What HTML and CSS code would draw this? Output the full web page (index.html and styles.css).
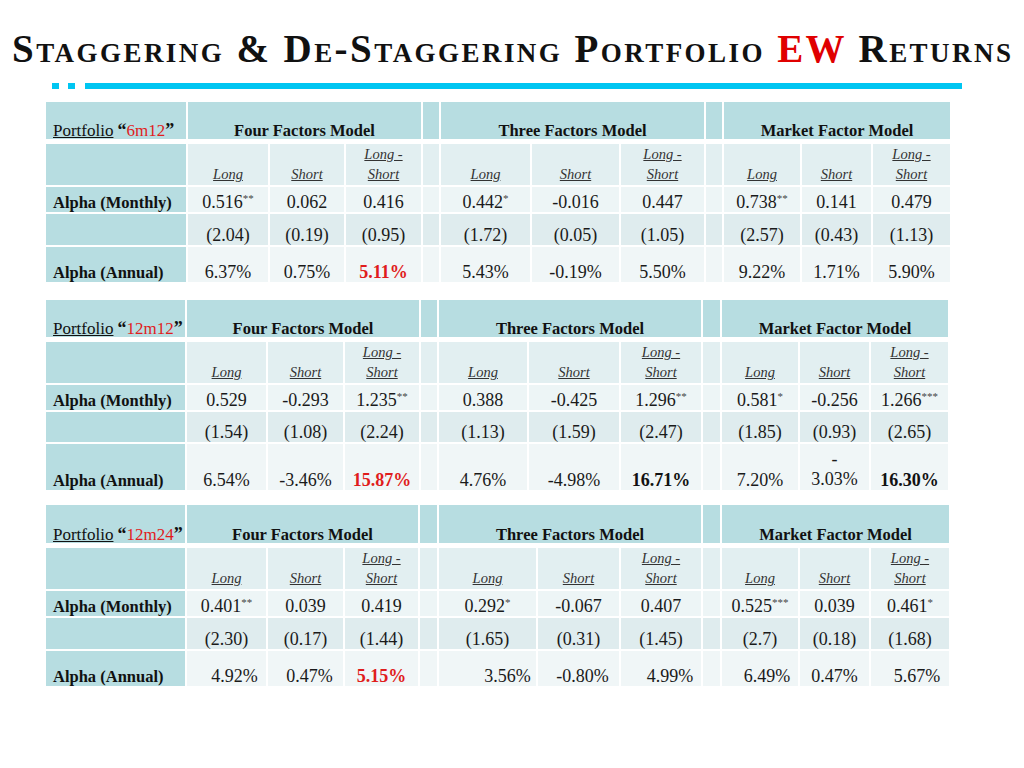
FILE: index.html
```html
<!DOCTYPE html>
<html>
<head>
<meta charset="utf-8">
<link rel="stylesheet" href="styles.css">
</head>
<body>
<h1 class="title">Staggering &amp; De-Staggering Portfolio <span class="ew">EW</span> Returns</h1>
<div class="rule"><span class="sq"></span><span class="sq"></span><span class="bar"></span></div>

<div class="tbl t1">
  <div class="c hd lab"><span><u class="pf">Portfolio</u> <b class="q">“</b><span class="red">6m12</span><b class="q">”</b></span></div>
  <div class="c hd span3">Four Factors Model</div>
  <div class="c hd"></div>
  <div class="c hd span3">Three Factors Model</div>
  <div class="c hd"></div>
  <div class="c hd span3">Market Factor Model</div>

  <div class="c lab"></div>
  <div class="c rs sh"><span>Long</span></div><div class="c rs sh"><span>Short</span></div><div class="c rs sh"><span>Long -<br>Short</span></div>
  <div class="c rs"></div>
  <div class="c rs sh"><span>Long</span></div><div class="c rs sh"><span>Short</span></div><div class="c rs sh"><span>Long -<br>Short</span></div>
  <div class="c rs"></div>
  <div class="c rs sh"><span>Long</span></div><div class="c rs sh"><span>Short</span></div><div class="c rs sh"><span>Long -<br>Short</span></div>

  <div class="c lab">Alpha (Monthly)</div>
  <div class="c rm"><span>0.516<sup>**</sup></span></div><div class="c rm">0.062</div><div class="c rm">0.416</div>
  <div class="c rm"></div>
  <div class="c rm"><span>0.442<sup>*</sup></span></div><div class="c rm">-0.016</div><div class="c rm">0.447</div>
  <div class="c rm"></div>
  <div class="c rm"><span>0.738<sup>**</sup></span></div><div class="c rm">0.141</div><div class="c rm">0.479</div>

  <div class="c lab"></div>
  <div class="c rt">(2.04)</div><div class="c rt">(0.19)</div><div class="c rt">(0.95)</div>
  <div class="c rt"></div>
  <div class="c rt">(1.72)</div><div class="c rt">(0.05)</div><div class="c rt">(1.05)</div>
  <div class="c rt"></div>
  <div class="c rt">(2.57)</div><div class="c rt">(0.43)</div><div class="c rt">(1.13)</div>

  <div class="c lab">Alpha (Annual)</div>
  <div class="c ra">6.37%</div><div class="c ra">0.75%</div><div class="c ra redb">5.11%</div>
  <div class="c ra"></div>
  <div class="c ra">5.43%</div><div class="c ra">-0.19%</div><div class="c ra">5.50%</div>
  <div class="c ra"></div>
  <div class="c ra">9.22%</div><div class="c ra">1.71%</div><div class="c ra">5.90%</div>
</div>

<div class="tbl t2">
  <div class="c hd lab"><span><u class="pf">Portfolio</u> <b class="q">“</b><span class="red">12m12</span><b class="q">”</b></span></div>
  <div class="c hd span3">Four Factors Model</div>
  <div class="c hd"></div>
  <div class="c hd span3">Three Factors Model</div>
  <div class="c hd"></div>
  <div class="c hd span3">Market Factor Model</div>

  <div class="c lab"></div>
  <div class="c rs sh"><span>Long</span></div><div class="c rs sh"><span>Short</span></div><div class="c rs sh"><span>Long -<br>Short</span></div>
  <div class="c rs"></div>
  <div class="c rs sh"><span>Long</span></div><div class="c rs sh"><span>Short</span></div><div class="c rs sh"><span>Long -<br>Short</span></div>
  <div class="c rs"></div>
  <div class="c rs sh"><span>Long</span></div><div class="c rs sh"><span>Short</span></div><div class="c rs sh"><span>Long -<br>Short</span></div>

  <div class="c lab">Alpha (Monthly)</div>
  <div class="c rm">0.529</div><div class="c rm">-0.293</div><div class="c rm"><span>1.235<sup>**</sup></span></div>
  <div class="c rm"></div>
  <div class="c rm">0.388</div><div class="c rm">-0.425</div><div class="c rm"><span>1.296<sup>**</sup></span></div>
  <div class="c rm"></div>
  <div class="c rm"><span>0.581<sup>*</sup></span></div><div class="c rm">-0.256</div><div class="c rm"><span>1.266<sup>***</sup></span></div>

  <div class="c lab"></div>
  <div class="c rt">(1.54)</div><div class="c rt">(1.08)</div><div class="c rt">(2.24)</div>
  <div class="c rt"></div>
  <div class="c rt">(1.13)</div><div class="c rt">(1.59)</div><div class="c rt">(2.47)</div>
  <div class="c rt"></div>
  <div class="c rt">(1.85)</div><div class="c rt">(0.93)</div><div class="c rt">(2.65)</div>

  <div class="c lab">Alpha (Annual)</div>
  <div class="c ra">6.54%</div><div class="c ra">-3.46%</div><div class="c ra redb">15.87%</div>
  <div class="c ra"></div>
  <div class="c ra">4.76%</div><div class="c ra">-4.98%</div><div class="c ra bold">16.71%</div>
  <div class="c ra"></div>
  <div class="c ra">7.20%</div><div class="c ra ctr"><span>-<br>3.03%</span></div><div class="c ra bold">16.30%</div>
</div>

<div class="tbl t3">
  <div class="c hd lab"><span><u class="pf">Portfolio</u> <b class="q">“</b><span class="red">12m24</span><b class="q">”</b></span></div>
  <div class="c hd span3">Four Factors Model</div>
  <div class="c hd"></div>
  <div class="c hd span3">Three Factors Model</div>
  <div class="c hd"></div>
  <div class="c hd span3">Market Factor Model</div>

  <div class="c lab"></div>
  <div class="c rs sh"><span>Long</span></div><div class="c rs sh"><span>Short</span></div><div class="c rs sh"><span>Long -<br>Short</span></div>
  <div class="c rs"></div>
  <div class="c rs sh"><span>Long</span></div><div class="c rs sh"><span>Short</span></div><div class="c rs sh"><span>Long -<br>Short</span></div>
  <div class="c rs"></div>
  <div class="c rs sh"><span>Long</span></div><div class="c rs sh"><span>Short</span></div><div class="c rs sh"><span>Long -<br>Short</span></div>

  <div class="c lab">Alpha (Monthly)</div>
  <div class="c rm"><span>0.401<sup>**</sup></span></div><div class="c rm">0.039</div><div class="c rm">0.419</div>
  <div class="c rm"></div>
  <div class="c rm"><span>0.292<sup>*</sup></span></div><div class="c rm">-0.067</div><div class="c rm">0.407</div>
  <div class="c rm"></div>
  <div class="c rm"><span>0.525<sup>***</sup></span></div><div class="c rm">0.039</div><div class="c rm"><span>0.461<sup>*</sup></span></div>

  <div class="c lab"></div>
  <div class="c rt">(2.30)</div><div class="c rt">(0.17)</div><div class="c rt">(1.44)</div>
  <div class="c rt"></div>
  <div class="c rt">(1.65)</div><div class="c rt">(0.31)</div><div class="c rt">(1.45)</div>
  <div class="c rt"></div>
  <div class="c rt">(2.7)</div><div class="c rt">(0.18)</div><div class="c rt">(1.68)</div>

  <div class="c lab">Alpha (Annual)</div>
  <div class="c ra pl16">4.92%</div><div class="c ra pl8">0.47%</div><div class="c ra redb">5.15%</div>
  <div class="c ra"></div>
  <div class="c ra pl40">3.56%</div><div class="c ra pl8">-0.80%</div><div class="c ra pl18">4.99%</div>
  <div class="c ra"></div>
  <div class="c ra pl14">6.49%</div><div class="c ra">0.47%</div><div class="c ra pl14">5.67%</div>
</div>
</body>
</html>
```

FILE: styles.css
```css
html, body {
  margin: 0;
  padding: 0;
  background: #fff;
}
body {
  width: 1024px;
  height: 768px;
  overflow: hidden;
  font-family: "Liberation Serif", "Times New Roman", serif;
  color: #1a1a1a;
}
.title {
  margin: 26px 0 0 0;
  padding-left: 12px;
  font-size: 39px;
  line-height: 46px;
  letter-spacing: 2.45px;
  font-weight: bold;
  font-variant: small-caps;
  color: #111;
  white-space: nowrap;
}
.ew {
  color: #e00000;
}
.rule {
  display: flex;
  gap: 9px;
  margin: 11px 0 0 52px;
  height: 6px;
}
.sq {
  width: 7px;
  height: 6px;
  background: #00c6f2;
}
.bar {
  width: 877px;
  height: 6px;
  margin-left: 1px;
  background: #00c6f2;
}
.tbl {
  display: grid;
  gap: 2px;
  background: #fff;
  margin-left: 46px;
  width: max-content;
}
.t1 {
  margin-top: 13px;
  grid-template-columns: 140px 80px 74px 75px 16px 89px 87px 83px 16px 76px 69px 77px;
  grid-template-rows: 40px 41px 25px 31px 35px;
}
.t2 {
  margin-top: 18px;
  grid-template-columns: 139px 79px 75px 74px 16px 88px 90px 80px 17px 76px 69px 77px;
  grid-template-rows: 40px 41px 25px 30px 46px;
}
.t3 {
  margin-top: 15px;
  grid-template-columns: 139px 79px 75px 73px 17px 97px 81px 80px 17px 76px 69px 78px;
  grid-template-rows: 41px 41px 25px 31px 35px;
}
.c {
  display: flex;
  align-items: flex-end;
  justify-content: center;
  font-size: 18px;
  line-height: 20px;
  white-space: nowrap;
}
.hd {
  background: #b7dde1;
  margin-bottom: 3px;
  font-weight: bold;
  font-size: 16.5px;
  line-height: 17px;
  color: #111;
}
.span3 {
  grid-column: span 3;
}
.lab {
  background: #b7dde1;
  justify-content: flex-start;
  padding-left: 7px;
  font-weight: bold;
  font-size: 16.5px;
  line-height: 19px;
  color: #111;
}
.lab.hd {
  line-height: 17px;
}
.pf {
  font-weight: normal;
  font-size: 17px;
}
.q {
  font-size: 18px;
}
.red {
  color: #e01c1c;
  font-weight: normal;
  font-size: 17px;
}
.rs { background: #e2eff1; }
.rm { background: #edf5f6; }
.rt { background: #dfecee; }
.ra { background: #f0f6f7; }
.sh {
  font-style: italic;
  text-decoration: underline;
  font-size: 14.5px;
  line-height: 20px;
  color: #333;
  text-align: center;
  padding-bottom: 1px;
}
sup {
  font-size: 11px;
  line-height: 0;
  vertical-align: 6px;
  color: #444;
}
.redb {
  color: #e01c1c;
  font-weight: bold;
}
.bold {
  font-weight: bold;
  color: #111;
}
.ctr {
  text-align: center;
  padding-bottom: 1px;
}
.pl8 { padding-left: 8px; }
.pl14 { padding-left: 14px; }
.pl16 { padding-left: 16px; }
.pl18 { padding-left: 18px; }
.pl40 { padding-left: 40px; }
```
